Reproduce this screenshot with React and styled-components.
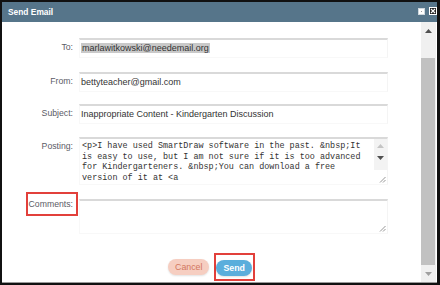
import React from 'react';
import styled, { createGlobalStyle } from 'styled-components';

const GlobalStyle = createGlobalStyle`
  * { box-sizing: border-box; }
  html, body {
    margin: 0;
    padding: 0;
    background: #111;
  }
  body {
    font-family: "Liberation Sans", Arial, sans-serif;
  }
`

const Frame = styled.div`
  width: 440px;
  height: 285px;
  padding: 2px 3px 2px 2px;
  background: #111;
`

const Window = styled.div`
  display: flex;
  flex-direction: column;
  height: 100%;
  background: #fff;
  border-bottom: 1px solid #9a9a9a;
`

const TitleBar = styled.div`
  height: 20px;
  flex: none;
  display: flex;
  align-items: center;
  justify-content: space-between;
  padding: 0 0 0 6px;
  background: #56758a;
  color: #fff;
  font-weight: bold;
  font-size: 8.4px;
`

const TitleIcons = styled.div`
  display: flex;
  gap: 4px;
  align-items: center;
  margin-top: -2px;
`

const Body = styled.div`
  flex: 1;
  display: flex;
  min-height: 0;
`

const Content = styled.div`
  flex: 1;
  padding-top: 16px;
  display: flex;
  flex-direction: column;
`

const Row = styled.div`
  display: flex;
  align-items: flex-start;
  margin-top: ${p => p.$gap}px;
`

const LabelCell = styled.div`
  width: 71px;
  flex: none;
  display: flex;
  justify-content: flex-end;
`

const Label = styled.span`
  font-size: 8.7px;
  line-height: 12px;
  color: #5b5b66;
  padding-top: 3px;
  ${p => p.$boxed && `
    padding: 4px 3px 4px 1px;
    border: 2px solid #e2403b;
    margin: -7px -5px 0 0;
  `}
`

const Field = styled.div`
  margin-left: 6px;
  width: 309px;
  height: ${p => p.$h}px;
  border-top: 2px solid #d9d9d9;
  border-left: 1px solid #f8f8f8;
  border-right: 1px solid #f4f4f4;
  border-bottom: 1px solid #f8f8f8;
  padding: 2px 0 0 1px;
  font-size: 9px;
  line-height: 12px;
  color: #333;
`

const Selected = styled.span`
  background: #c9c9c9;
  padding: 0 1px;
`

const TextBox = styled.div`
  margin-left: 6px;
  width: 309px;
  height: ${p => p.$h}px;
  border-top: 2px solid #d9d9d9;
  border-left: 1px solid #f8f8f8;
  border-right: 1px solid #f4f4f4;
  border-bottom: 1px solid #f8f8f8;
  display: flex;
  position: relative;
`

const MonoText = styled.div`
  flex: 1;
  padding: 2px 0 0 2px;
  font-family: "Liberation Mono", "Courier New", monospace;
  font-size: 8.45px;
  line-height: 10.6px;
  color: #333;
  white-space: pre;
`

const MiniRail = styled.div`
  width: 13px;
  height: 31px;
  background: #f3f3f3;
  display: flex;
  flex-direction: column;
  align-items: center;
  gap: 8px;
  padding-top: 5px;
`

const Grip = styled.svg`
  position: absolute;
  right: 1px;
  bottom: 1px;
`

const Buttons = styled.div`
  margin-top: 19px;
  display: flex;
  justify-content: center;
  align-items: center;
  gap: 5px;
`

const PillButton = styled.button`
  border: none;
  border-radius: 9px;
  height: 16px;
  padding: 0 7px;
  font-family: "Liberation Sans", Arial, sans-serif;
  font-size: 8.8px;
  line-height: 16px;
  background: ${p => p.$primary ? '#5aaedc' : '#f6cec1'};
  color: ${p => p.$primary ? '#fff' : '#d2765e'};
  font-weight: ${p => p.$primary ? 'bold' : 'normal'};
  box-shadow: 0 1px 2px rgba(0,0,0,0.12);
  cursor: pointer;
`

const Callout = styled.div`
  border: 2px solid #e2403b;
  padding: 2px 1px 3px 0;
`

const ScrollBar = styled.div`
  width: 16px;
  flex: none;
  background: #f0f0f0;
  border-right: 1px solid #fff;
  display: flex;
  flex-direction: column;
`

const ArrowBox = styled.div`
  height: 17px;
  flex: none;
  display: flex;
  align-items: center;
  justify-content: center;
`

const Thumb = styled.div`
  margin: 19px 1px 0 0;
  flex: 1;
  background: #c1c1c1;
`

const Arrow = ({ up, color = '#505050' }) => (
  <svg width="7" height="4" viewBox="0 0 7 4">
    <path d={up ? 'M0 4 L3.5 0 L7 4 Z' : 'M0 0 L3.5 4 L7 0 Z'} fill={color} />
  </svg>
)

const ResizeGrip = () => (
  <Grip width="7" height="7" viewBox="0 0 7 7">
    <path d="M6.5 1 L1 6.5 M6.5 4 L4 6.5" stroke="#8a8a8a" strokeWidth="0.9" />
  </Grip>
)

const posting = `<p>I have used SmartDraw software in the past. &nbsp;It
is easy to use, but I am not sure if it is too advanced
for Kindergarteners. &nbsp;You can download a free
version of it at <a`

export default function App() {
  return (
    <Frame>
      <GlobalStyle />
      <Window>
        <TitleBar>
          <span>Send Email</span>
          <TitleIcons>
            <svg width="7" height="7" viewBox="0 0 7 7">
              <rect x="0.5" y="0.5" width="6" height="6" fill="#fff" stroke="#cfd8de" />
              <rect x="3" y="3" width="1" height="1" fill="#999" />
            </svg>
            <svg width="8" height="8" viewBox="0 0 8 8">
              <rect x="0" y="0" width="8" height="8" fill="#fff" />
              <rect x="1" y="1" width="6" height="6" fill="#222" />
              <path d="M2 2 L6 6 M6 2 L2 6" stroke="#fff" strokeWidth="1.1" />
            </svg>
          </TitleIcons>
        </TitleBar>
        <Body>
          <Content>
            <Row $gap={0}>
              <LabelCell><Label>To:</Label></LabelCell>
              <Field $h={20}><Selected>marlawitkowski@needemail.org</Selected></Field>
            </Row>
            <Row $gap={14}>
              <LabelCell><Label>From:</Label></LabelCell>
              <Field $h={20}>bettyteacher@gmail.com</Field>
            </Row>
            <Row $gap={12}>
              <LabelCell><Label>Subject:</Label></LabelCell>
              <Field $h={20}>Inappropriate Content - Kindergarten Discussion</Field>
            </Row>
            <Row $gap={13}>
              <LabelCell><Label>Posting:</Label></LabelCell>
              <TextBox $h={48}>
                <MonoText>{posting}</MonoText>
                <MiniRail>
                  <Arrow up color="#c4c4c4" />
                  <Arrow color="#505050" />
                </MiniRail>
                <ResizeGrip />
              </TextBox>
            </Row>
            <Row $gap={14}>
              <LabelCell><Label $boxed>Comments:</Label></LabelCell>
              <TextBox $h={35}>
                <ResizeGrip />
              </TextBox>
            </Row>
            <Buttons>
              <PillButton>Cancel</PillButton>
              <Callout>
                <PillButton $primary>Send</PillButton>
              </Callout>
            </Buttons>
          </Content>
          <ScrollBar>
            <ArrowBox><Arrow up /></ArrowBox>
            <Thumb />
            <ArrowBox><Arrow color="#a0a0a0" /></ArrowBox>
          </ScrollBar>
        </Body>
      </Window>
    </Frame>
  );
}
